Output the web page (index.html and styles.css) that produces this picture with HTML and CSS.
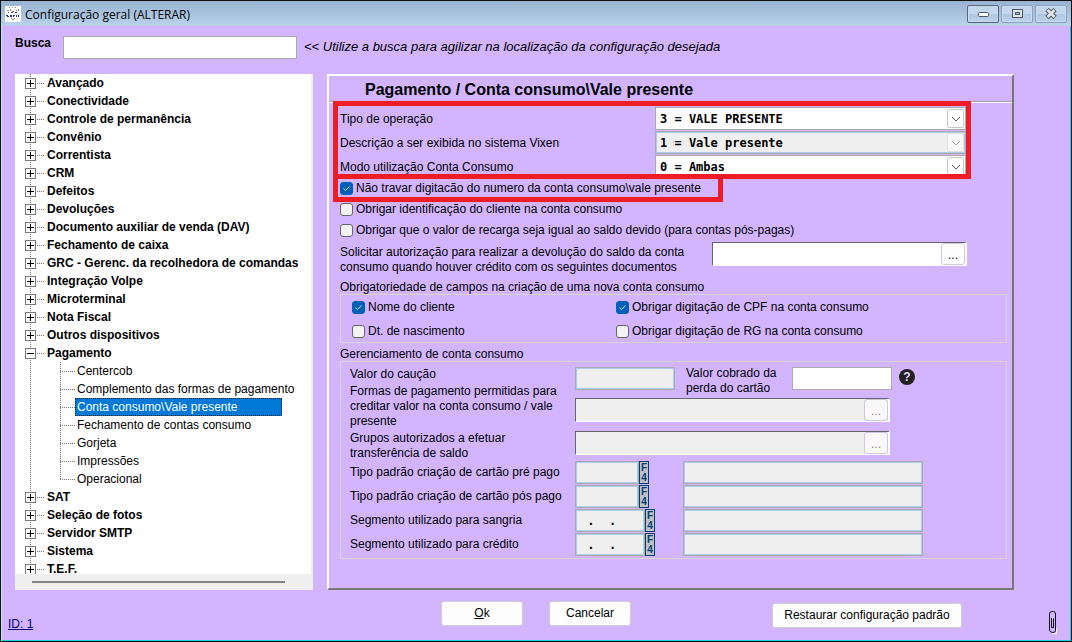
FILE: index.html
```
<!DOCTYPE html>
<html lang="pt-BR">
<head>
  <meta charset="UTF-8" />
  <meta name="viewport" content="width=device-width, initial-scale=1.0"/>
  <title>Configuração geral (ALTERAR)</title>
  <link rel="stylesheet" href="styles.css">
</head>
<body>

  <header class="titlebar">
    <svg class="app-icon" viewBox="0 0 16 16" shape-rendering="crispEdges">
      <rect width="16" height="16" fill="#fff"/>
      <path d="M4 1h1v1h-1zM7 1h1v1h-1zM10 1h1v1h-1zM2 4h2v1h-2zM5 3h1v2h-1zM7 5h2v1h-2zM11 4h1v1h-1zM13 3h1v2h-1zM7 13h2v1h-2zM6 12h1v1h-1zM9 12h1v1h-1z" fill="#888"/>
      <path d="M3 6h1v1h-1zM6 6h2v1h-2zM10 6h2v1h-2z" fill="#445"/>
      <path d="M1 9h2v1h-2zM2 10h2v1h-2zM5 9h2v2h-2zM8 9h2v1h-2zM8 10h1v1h-1zM11 9h1v2h-1zM13 9h1v2h-1z" fill="#22309a"/>
    </svg>
    <h1 class="titlebar-text">Configuração geral (ALTERAR)</h1>
    <div class="window-buttons">
      <button class="window-button active" aria-label="Minimizar">
        <svg width="12" height="12"><rect x="1.500" y="4.500" width="10" height="4" rx="1" fill="#fff" stroke="#4f5866"/></svg>
      </button>
      <button class="window-button" aria-label="Maximizar">
        <svg width="12" height="12"><rect x="1.500" y="1.500" width="10" height="8" fill="#dfe3ea" stroke="#4f5866"/><rect x="4.500" y="4.500" width="4" height="2" fill="#a9c0dc" stroke="#4f5866"/></svg>
      </button>
      <button class="window-button" aria-label="Fechar">
        <svg width="12" height="12"><path d="M2 1.500L10 9.500M10 1.500L2 9.500" stroke="#4f5866" stroke-width="4.600"/><path d="M2.500 2L9.500 9M9.500 2L2.500 9" stroke="#e6e8ee" stroke-width="2.600"/></svg>
      </button>
    </div>
  </header>

  <div class="search-row">
    <label class="search-label" for="busca">Busca</label>
    <input type="text" id="busca" class="search-input" />
    <span class="search-hint">&lt;&lt; Utilize a busca para agilizar na localização da configuração desejada</span>
  </div>

  <main class="content">
    <nav class="tree">
      <ul class="tree-list">
        <li><button class="toggle plus" aria-label="Expandir"></button><span>Avançado</span></li>
        <li><button class="toggle plus" aria-label="Expandir"></button><span>Conectividade</span></li>
        <li><button class="toggle plus" aria-label="Expandir"></button><span>Controle de permanência</span></li>
        <li><button class="toggle plus" aria-label="Expandir"></button><span>Convênio</span></li>
        <li><button class="toggle plus" aria-label="Expandir"></button><span>Correntista</span></li>
        <li><button class="toggle plus" aria-label="Expandir"></button><span>CRM</span></li>
        <li><button class="toggle plus" aria-label="Expandir"></button><span>Defeitos</span></li>
        <li><button class="toggle plus" aria-label="Expandir"></button><span>Devoluções</span></li>
        <li><button class="toggle plus" aria-label="Expandir"></button><span>Documento auxiliar de venda (DAV)</span></li>
        <li><button class="toggle plus" aria-label="Expandir"></button><span>Fechamento de caixa</span></li>
        <li><button class="toggle plus" aria-label="Expandir"></button><span>GRC - Gerenc. da recolhedora de comandas</span></li>
        <li><button class="toggle plus" aria-label="Expandir"></button><span>Integração Volpe</span></li>
        <li><button class="toggle plus" aria-label="Expandir"></button><span>Microterminal</span></li>
        <li><button class="toggle plus" aria-label="Expandir"></button><span>Nota Fiscal</span></li>
        <li><button class="toggle plus" aria-label="Expandir"></button><span>Outros dispositivos</span></li>
        <li>
          <button class="toggle" aria-label="Recolher"></button><span>Pagamento</span>
          <ul class="tree-children">
            <li><span>Centercob</span></li>
            <li><span>Complemento das formas de pagamento</span></li>
            <li><span class="selected">Conta consumo\Vale presente</span></li>
            <li><span>Fechamento de contas consumo</span></li>
            <li><span>Gorjeta</span></li>
            <li><span>Impressões</span></li>
            <li><span>Operacional</span></li>
          </ul>
        </li>
        <li><button class="toggle plus" aria-label="Expandir"></button><span>SAT</span></li>
        <li><button class="toggle plus" aria-label="Expandir"></button><span>Seleção de fotos</span></li>
        <li><button class="toggle plus" aria-label="Expandir"></button><span>Servidor SMTP</span></li>
        <li><button class="toggle plus" aria-label="Expandir"></button><span>Sistema</span></li>
        <li><button class="toggle plus" aria-label="Expandir"></button><span>T.E.F.</span></li>
      </ul>
      <div class="scrollbar"><div class="scroll-thumb"></div></div>
    </nav>

    <section class="panel">
      <h2 class="panel-title">Pagamento / Conta consumo\Vale presente</h2>
      <form class="panel-form">
        <div class="select-group highlight">
          <label for="tipo">Tipo de operação</label>
          <div class="select-box">
            <select id="tipo"><option>3 = VALE PRESENTE</option></select>
            <span class="arrow"><svg width="10" height="6"><path d="M1 1l4 4 4-4" fill="none" stroke="#555"/></svg></span>
          </div>
          <label for="descricao">Descrição a ser exibida no sistema Vixen</label>
          <div class="select-box readonly">
            <select id="descricao"><option>1 = Vale presente</option></select>
            <span class="arrow"><svg width="10" height="6"><path d="M1 1l4 4 4-4" fill="none" stroke="#aaa"/></svg></span>
          </div>
          <label for="modo">Modo utilização Conta Consumo</label>
          <div class="select-box">
            <select id="modo"><option>0 = Ambas</option></select>
            <span class="arrow"><svg width="10" height="6"><path d="M1 1l4 4 4-4" fill="none" stroke="#555"/></svg></span>
          </div>
        </div>

        <div class="check-group">
          <label class="check highlight"><input type="checkbox" checked />Não travar digitacão do numero da conta consumo\vale presente</label>
          <label class="check"><input type="checkbox" />Obrigar identificação do cliente na conta consumo</label>
          <label class="check"><input type="checkbox" />Obrigar que o valor de recarga seja igual ao saldo devido (para contas pós-pagas)</label>
        </div>

        <div class="auth-row">
          <label for="documentos">Solicitar autorização para realizar a devolução do saldo da conta consumo quando houver crédito com os seguintes documentos</label>
          <div class="picker">
            <input type="text" id="documentos" />
            <button type="button">...</button>
          </div>
        </div>

        <h3 class="group-title">Obrigatoriedade de campos na criação de uma nova conta consumo</h3>
        <div class="group required-fields">
          <label class="check"><input type="checkbox" checked />Nome do cliente</label>
          <label class="check"><input type="checkbox" checked />Obrigar digitação de CPF na conta consumo</label>
          <label class="check"><input type="checkbox" />Dt. de nascimento</label>
          <label class="check"><input type="checkbox" />Obrigar digitação de RG na conta consumo</label>
        </div>

        <h3 class="group-title">Gerenciamento de conta consumo</h3>
        <div class="group management">
          <div class="management-labels">
            <label for="caucao">Valor do caução</label>
            <label for="formas">Formas de pagamento permitidas para creditar valor na conta consumo / vale presente</label>
            <label for="grupos">Grupos autorizados a efetuar transferência de saldo</label>
            <div class="code-labels">
              <label for="pre-pago">Tipo padrão criação de cartão pré pago</label>
              <label for="pos-pago">Tipo padrão criação de cartão pós pago</label>
              <label for="sangria">Segmento utilizado para sangria</label>
              <label for="credito">Segmento utilizado para crédito</label>
            </div>
          </div>
          <div class="management-fields">
            <div class="value-row">
              <input type="text" id="caucao" class="field readonly" readonly />
              <label for="perda">Valor cobrado da perda do cartão</label>
              <input type="text" id="perda" class="field" />
              <button type="button" class="help" aria-label="Ajuda">?</button>
            </div>
            <div class="picker disabled">
              <input type="text" id="formas" readonly />
              <button type="button">...</button>
            </div>
            <div class="picker disabled">
              <input type="text" id="grupos" readonly />
              <button type="button">...</button>
            </div>
            <div class="lookup-rows">
              <div class="lookup">
                <div class="lookup-code"><input type="text" id="pre-pago" class="field readonly code" readonly /><button type="button" class="f4"><span>F</span><span>4</span></button></div>
                <input type="text" class="field readonly name" aria-label="Nome do cartão pré pago" readonly />
              </div>
              <div class="lookup">
                <div class="lookup-code"><input type="text" id="pos-pago" class="field readonly code" readonly /><button type="button" class="f4"><span>F</span><span>4</span></button></div>
                <input type="text" class="field readonly name" aria-label="Nome do cartão pós pago" readonly />
              </div>
              <div class="lookup">
                <div class="lookup-code"><input type="text" id="sangria" class="field readonly segment" value=" .  ." readonly /><button type="button" class="f4"><span>F</span><span>4</span></button></div>
                <input type="text" class="field readonly name" aria-label="Nome do segmento para sangria" readonly />
              </div>
              <div class="lookup">
                <div class="lookup-code"><input type="text" id="credito" class="field readonly segment" value=" .  ." readonly /><button type="button" class="f4"><span>F</span><span>4</span></button></div>
                <input type="text" class="field readonly name" aria-label="Nome do segmento para crédito" readonly />
              </div>
            </div>
          </div>
        </div>
      </form>
    </section>
  </main>

  <footer class="footer">
    <a class="id-link" href="#">ID: 1</a>
    <div class="main-buttons">
      <button class="push-button"><u>O</u>k</button>
      <button class="push-button">Cancelar</button>
    </div>
    <button class="push-button restore">Restaurar configuração padrão</button>
    <svg class="clip" width="8" height="23" viewBox="0 0 8 23">
      <path d="M7.500 17V22.500H3" fill="none" stroke="#fff"/>
      <path d="M2.500 7V16.500M2.500 16.500H4.500M4.500 17V7.500M.5 20V3Q.5 .5 3 .5H4.500Q6.500 .5 6.500 3V19.500Q6.500 21.500 4 21.500T.5 19.500" fill="none" stroke="#111"/>
    </svg>
  </footer>

</body>
</html>
```

FILE: styles.css
```
* {
  box-sizing: border-box;
}
body {
  margin: 0;
  min-height: 100vh;
  display: flex;
  flex-direction: column;
  font-family: "Liberation Sans", Arial, sans-serif;
  font-size: 12px;
  line-height: 15px;
  color: #000;
  background-color: #d3b5ff;
  border: 1px solid #111;
  box-shadow: inset 1px 0 #c4e4f4, inset -1px -1px #18d0e4;
}
input, select, button {
  font: inherit;
  color: inherit;
  margin: 0;
  padding: 0;
  border-radius: 0;
}
h1, h2, h3 {
  margin: 0;
}

/* title bar */
.titlebar {
  display: flex;
  align-items: center;
  height: 25px;
  padding: 1px 4px 0;
  background: linear-gradient(#98b3d1, #bad2eb);
}
.app-icon {
  width: 16px;
  height: 16px;
  margin-right: 4px;
}
.titlebar-text {
  flex: 1;
  font-family: "Open Sans", sans-serif;
  font-size: 12px;
  font-weight: normal;
}
.window-buttons {
  display: flex;
  gap: 2px;
}
.window-button {
  display: flex;
  align-items: center;
  justify-content: center;
  width: 32px;
  height: 18px;
  border: 1px solid #8ca2bf;
  border-radius: 2px;
  background: linear-gradient(#c3d6ec 50%, #aec7e2 50%, #bdd3ea);
  box-shadow: inset 0 0 0 1px #c8daee;
}
.window-button.active {
  border-color: #56657c;
}

/* search */
.search-row {
  display: flex;
  padding: 10px 14px 15px;
}
.search-label {
  width: 48px;
  font-weight: bold;
}
.search-input {
  width: 234px;
  height: 23px;
  border: 1px solid #ababab;
  background-color: #fff;
}
.search-hint {
  margin: 3px 0 0 7px;
  font-size: 13px;
  font-style: italic;
}

.content {
  flex: 1;
  display: grid;
  grid-template-columns: 298px 1fr;
  gap: 14px;
  padding: 0 57px 0 14px;
}

/* tree */
.tree {
  display: flex;
  flex-direction: column;
  height: 516px;
  background-color: #fff;
  border-right: 2px solid #efefef;
}
.tree-list, .tree-children {
  list-style: none;
  margin: 0;
  padding: 0;
}
.tree-list {
  flex: 1;
  overflow: hidden;
  font-weight: bold;
}
.tree-list > li {
  display: flex;
  flex-wrap: wrap;
  align-items: center;
  line-height: 18px;
  padding-left: 10px;
  background: repeating-linear-gradient(#777 0 1px, #fff 1px 2px) 15px 0 / 1px 100% no-repeat;
}
.tree-list > li > span::before {
  content: "";
  display: inline-block;
  width: 7px;
  margin: 0 3px 3px 1px;
  border-top: 1px dotted #777;
}
.toggle {
  width: 11px;
  height: 11px;
  border: 1px solid #777;
  background: linear-gradient(#000, #000) center / 7px 1px no-repeat, #fff;
}
.toggle.plus {
  background: linear-gradient(#000, #000) center / 7px 1px no-repeat, linear-gradient(#000, #000) center / 1px 7px no-repeat, #fff;
}
.tree-children {
  width: 100%;
  padding-left: 35px;
  font-weight: normal;
  background: repeating-linear-gradient(#777 0 1px, #fff 1px 2px) 35px 0 / 1px 118px no-repeat;
}
.tree-children li {
  display: flex;
  align-items: center;
  height: 18px;
  white-space: nowrap;
}
.tree-children li::before {
  content: "";
  width: 15px;
  border-top: 1px dotted #777;
}
.tree-children span {
  padding: 0 2px;
}
.tree-children .selected {
  width: 207px;
  color: #fff;
  background-color: #0078d7;
  outline: 1px dotted #222;
  outline-offset: -1px;
}
.scrollbar {
  height: 16px;
  margin-right: -2px;
  padding: 7px 28px 0 17px;
  background-color: #efefef;
}
.scroll-thumb {
  height: 2px;
  background-color: #858585;
}

/* panel */
.panel {
  border: 2px solid #fff;
  border-right-color: #777;
  border-bottom-color: #777;
}
.panel-title {
  height: 27px;
  padding-left: 36px;
  font-size: 16px;
  line-height: 27px;
  border-bottom: 1px solid #fff;
  box-shadow: inset 0 -1px #a8a0b8;
}
.panel-form {
  padding: 4px 5px 0 11px;
}

/* red frames around the settings being explained */
.highlight {
  position: relative;
}
.highlight::after {
  content: "";
  position: absolute;
  inset: -6px -5px -1px -7px;
  border: 5px solid #ee1c25;
  pointer-events: none;
}
.select-group {
  display: grid;
  grid-template-columns: 315px 1fr;
  row-gap: 1px;
  align-items: center;
  margin-right: 41px;
}
.select-group label {
  padding-top: 1px;
}
.select-box {
  display: grid;
  grid-template-columns: 1fr 17px;
  align-items: center;
  height: 23px;
  padding-right: 1px;
  border: 1px solid #ababab;
  background-color: #fff;
}
.select-box select {
  grid-area: 1 / 1 / 2 / 3;
  appearance: none;
  height: 19px;
  padding-left: 4px;
  border: none;
  outline: none;
  background: none;
  font: bold 12px "DejaVu Sans Mono", monospace;
}
.arrow {
  grid-area: 1 / 2;
  display: flex;
  align-items: center;
  justify-content: center;
  height: 19px;
  border: 1px solid #c8c8c8;
  border-radius: 2px;
  pointer-events: none;
}
.select-box.readonly .arrow {
  border-color: #e2e2e2;
  background-color: #f7f7f7;
}
.select-box.readonly, .field.readonly {
  background-color: #efefef;
  box-shadow: inset 0 0 0 1px #abcdeb;
}

.check-group {
  display: flex;
  flex-direction: column;
  align-items: flex-start;
}
.check {
  display: flex;
  align-items: center;
  gap: 3px;
  height: 21px;
}
.check.highlight::after {
  inset: -4px -22px -3px -7px;
}
.check input {
  appearance: none;
  width: 13px;
  height: 13px;
  border: 1px solid #666;
  border-radius: 3px;
  background-color: #f3f3f3;
}
.check input:checked {
  border-color: #005fb8;
  background: #005fb8 url("data:image/svg+xml,%3Csvg xmlns='http://www.w3.org/2000/svg' width='11' height='11'%3E%3Cpath d='M2.500 5.500l2 2 4-4' fill='none' stroke='%23cfe4f7'/%3E%3C/svg%3E") center no-repeat;
}

.auth-row {
  display: flex;
  justify-content: space-between;
  align-items: flex-start;
  margin: 1px 40px 4px 0;
}
.auth-row label {
  width: 360px;
  padding: 3px 0 1px;
}
.picker {
  display: flex;
  height: 24px;
  width: 255px;
  border-top: 1px solid #666;
  border-left: 1px solid #666;
  border-right: 2px solid #fff;
  border-bottom: 1px solid #fff;
  background-color: #fff;
}
.picker input {
  flex: 1;
  min-width: 0;
  border: none;
  background: none;
}
.picker button {
  width: 24px;
  height: 22px;
  padding-top: 3px;
  border: 1px solid #d2c4e6;
  border-radius: 3px;
  background-color: #fdfdfd;
}
.picker.disabled {
  width: 315px;
  background-color: #efefef;
}
.picker.disabled button {
  color: #888;
  background-color: #f8f8f8;
}

.group-title {
  font-size: 12px;
  font-weight: normal;
  line-height: 14px;
}
.group {
  border: 1px solid #d6d6d6;
}
.required-fields {
  display: grid;
  grid-template-columns: 264px 1fr;
  row-gap: 3px;
  padding: 2px 11px 0;
  margin-bottom: 4px;
}
.management {
  display: flex;
  padding: 4px 0 2px 9px;
}
.management-labels {
  display: flex;
  flex-direction: column;
  gap: 2px;
  width: 225px;
  padding-top: 1px;
}
.management-labels label {
  padding-right: 7px;
}
.code-labels {
  display: flex;
  flex-direction: column;
  line-height: 24px;
  margin-top: -3px;
  white-space: nowrap;
}
.value-row {
  display: flex;
  height: 30px;
  margin-bottom: 2px;
}
.value-row label {
  width: 117px;
  padding: 0 15px 0 11px;
}
.field {
  width: 100px;
  height: 23px;
  border: 1px solid #ababab;
  background-color: #fff;
  outline: none;
}
.value-row .field {
  margin-top: 1px;
}
.help {
  width: 16px;
  height: 16px;
  margin: 3px 0 0 7px;
  border: none;
  border-radius: 50%;
  background-color: #222;
  color: #e6d8ff;
  font-size: 12px;
  font-weight: bold;
  line-height: 16px;
}
.management .picker {
  margin-bottom: 9px;
}
.management .picker + .lookup-rows {
  margin-top: -3px;
}
.lookup-rows {
  display: flex;
  flex-direction: column;
  gap: 1px;
}
.lookup {
  display: flex;
}
.lookup-code {
  display: flex;
  width: 108px;
}
.code {
  width: 64px;
}
.segment {
  width: 70px;
  padding-left: 4px;
  font: bold 12px "DejaVu Sans Mono", monospace;
}
.lookup .name {
  width: 240px;
}
.f4 {
  display: flex;
  flex-direction: column;
  align-items: center;
  justify-content: center;
  width: 10px;
  height: 23px;
  border: 1px solid #003f7f;
  background-color: #c0c0c0;
  color: #003f7f;
  font: bold 10px/10px "Liberation Sans", Arial, sans-serif;
}

/* footer */
.footer {
  display: grid;
  grid-template-columns: 433px 331px 1fr auto;
  align-items: start;
  height: 51px;
  padding: 11px 14px 0 7px;
}
.id-link {
  margin-top: 16px;
  font-size: 12px;
  color: #00007f;
}
.main-buttons {
  display: flex;
  gap: 26px;
}
.push-button {
  width: 82px;
  height: 25px;
  border: 1px solid #d0d0d0;
  border-radius: 3px;
  background-color: #fdfdfd;
}
.push-button.restore {
  width: 190px;
  margin-top: 2px;
}
.clip {
  margin-top: 10px;
}
```
